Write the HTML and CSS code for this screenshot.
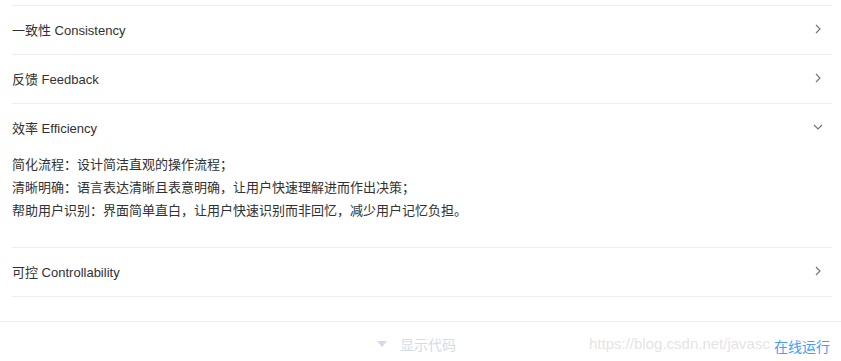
FILE: index.html
```html
<!DOCTYPE html>
<html lang="zh">
<head>
<meta charset="utf-8">
<title>Collapse</title>
<link rel="stylesheet" href="styles.css">
</head>
<body>
<div class="demo-block">
  <div class="source">
    <div class="collapse">
      <div class="item">
        <div class="header"><span>一致性 Consistency</span>
          <svg class="arrow" viewBox="0 0 10 10"><path d="M3 1 L7 5 L3 9" /></svg>
        </div>
      </div>
      <div class="item">
        <div class="header"><span>反馈 Feedback</span>
          <svg class="arrow" viewBox="0 0 10 10"><path d="M3 1 L7 5 L3 9" /></svg>
        </div>
      </div>
      <div class="item active">
        <div class="header"><span>效率 Efficiency</span>
          <svg class="arrow" viewBox="0 0 10 10"><path d="M3 1 L7 5 L3 9" /></svg>
        </div>
        <div class="content">
          <div>简化流程：设计简洁直观的操作流程；</div>
          <div>清晰明确：语言表达清晰且表意明确，让用户快速理解进而作出决策；</div>
          <div>帮助用户识别：界面简单直白，让用户快速识别而非回忆，减少用户记忆负担。</div>
        </div>
      </div>
      <div class="item last">
        <div class="header"><span>可控 Controllability</span>
          <svg class="arrow" viewBox="0 0 10 10"><path d="M3 1 L7 5 L3 9" /></svg>
        </div>
      </div>
    </div>
  </div>
  <div class="control">
    <div class="toggle">
      <svg class="caret" viewBox="0 0 10 6"><path d="M0 0 L10 0 L5 6 Z" /></svg>
      <span>显示代码</span>
    </div>
    <span class="watermark">https://blog.csdn.net/javasc</span>
    <span class="run">在线运行</span>
  </div>
</div>
</body>
</html>
```

FILE: styles.css
```css
html, body {
  margin: 0;
  padding: 0;
  background: #fff;
}
body {
  font-family: "Liberation Sans", Arial, "Noto Sans CJK SC", sans-serif;
  color: #303133;
}
.demo-block {
  width: 841px;
}
.source {
  padding: 5px 9px 24px 12px;
}
.collapse {
  border-top: 1px solid #ebeef5;
  border-bottom: 1px solid #ebeef5;
}
.header {
  box-sizing: border-box;
  height: 49px;
  padding-bottom: 2px;
  display: flex;
  align-items: center;
  font-size: 13px;
  color: #303133;
  border-bottom: 1px solid #ebeef5;
}
.header span {
  flex: 1;
}
.item.last .header {
  height: 48px;
  border-bottom: none;
}
.item.active .header {
  border-bottom-color: transparent;
}
.arrow {
  width: 10px;
  height: 10px;
  margin-right: 9px;
  fill: none;
  stroke: #6b7280;
  stroke-width: 1.1;
}
.item.active .arrow {
  transform: rotate(90deg);
  margin-right: 9px;
}
.content {
  border-bottom: 1px solid #ebeef5;
  padding-bottom: 25px;
  font-size: 13px;
  line-height: 23px;
  color: #303133;
}
.control {
  position: relative;
  border-top: 1px solid #eaeefb;
  height: 44px;
  display: flex;
  align-items: center;
  justify-content: center;
  overflow: hidden;
}
.toggle {
  display: flex;
  align-items: center;
  gap: 13px;
  padding-right: 8px;
  color: #d3dce6;
  font-size: 14px;
}
.caret {
  width: 10px;
  height: 6px;
  fill: #d3dce6;
}
.watermark {
  position: absolute;
  left: 589px;
  top: 13px;
  font-size: 15px;
  color: rgba(200, 200, 200, 0.5);
  white-space: nowrap;
}
.run {
  position: absolute;
  right: 11px;
  top: 14px;
  font-size: 14px;
  color: #409eff;
}
```
